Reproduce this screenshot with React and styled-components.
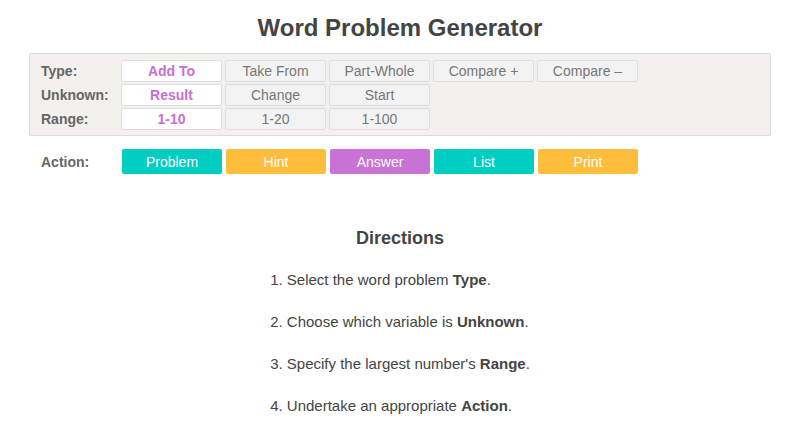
import styled, { createGlobalStyle } from "styled-components";

const GlobalStyle = createGlobalStyle`
  body {
    margin: 0;
    background: #fff;
    font-family: "Liberation Sans", Arial, sans-serif;
    color: #444;
  }
`;

const rows = [
  { label: "Type:", options: ["Add To", "Take From", "Part-Whole", "Compare +", "Compare –"] },
  { label: "Unknown:", options: ["Result", "Change", "Start"] },
  { label: "Range:", options: ["1-10", "1-20", "1-100"] },
];

const actions = [
  { text: "Problem", color: "#00cec3" },
  { text: "Hint", color: "#ffbd3c" },
  { text: "Answer", color: "#c873d5" },
  { text: "List", color: "#00cec3" },
  { text: "Print", color: "#ffbd3c" },
];

const steps = [
  ["Select the word problem ", "Type"],
  ["Choose which variable is ", "Unknown"],
  ["Specify the largest number's ", "Range"],
  ["Undertake an appropriate ", "Action"],
];

const App = () => {
  return (
    <Page>
      <GlobalStyle />
      <Title>Word Problem Generator</Title>
      <Panel>
        {rows.map((row) => (
          <Row key={row.label}>
            <Label>{row.label}</Label>
            {row.options.map((opt, i) => (
              <Option key={opt} selected={i === 0}>
                {opt}
              </Option>
            ))}
          </Row>
        ))}
      </Panel>
      <ActionRow>
        <Label>Action:</Label>
        {actions.map((a) => (
          <ActionButton key={a.text} color={a.color}>
            {a.text}
          </ActionButton>
        ))}
      </ActionRow>
      <Directions>
        <Heading>Directions</Heading>
        <Steps>
          {steps.map(([text, bold], i) => (
            <li key={bold}>
              {i + 1}. {text}
              <b>{bold}</b>.
            </li>
          ))}
        </Steps>
      </Directions>
    </Page>
  );
};

export default App;

const Page = styled.div`
  width: 742px;
  margin-left: 29px;
  padding-top: 14px;
`;

const Title = styled.h1`
  margin: 0 0 11px;
  text-align: center;
  font-size: 24px;
  line-height: 28px;
  font-weight: bold;
  color: #444;
`;

const Panel = styled.div`
  background: #f2f1ee;
  border: 1px solid #dddcda;
  border-radius: 2px;
  padding: 6px 11px 5px;
  display: flex;
  flex-direction: column;
  gap: 2px;
`;

const Row = styled.div`
  display: flex;
  align-items: center;
  gap: 3px;
`;

const Label = styled.div`
  width: 77px;
  font-size: 14px;
  font-weight: bold;
  color: #666;
`;

const Option = styled.div`
  box-sizing: border-box;
  width: 101px;
  height: 22px;
  display: flex;
  align-items: center;
  justify-content: center;
  font-size: 14px;
  border: 1px solid #dedede;
  border-radius: 2px;
  background: ${(p) => (p.selected ? "#fff" : "#f3f3f3")};
  color: ${(p) => (p.selected ? "#c76fd5" : "#777")};
  font-weight: ${(p) => (p.selected ? "bold" : "normal")};
`;

const ActionRow = styled.div`
  display: flex;
  align-items: center;
  gap: 4px;
  padding: 13px 12px 0 12px;
`;

const ActionButton = styled.div`
  width: 100px;
  height: 25px;
  display: flex;
  align-items: center;
  justify-content: center;
  border-radius: 2px;
  background: ${(p) => p.color};
  color: #fff;
  font-size: 14px;
`;

const Directions = styled.div`
  margin-top: 53px;
  text-align: center;
`;

const Heading = styled.h2`
  margin: 0 0 10px;
  font-size: 18px;
  line-height: 22px;
  font-weight: bold;
  color: #444;
`;

const Steps = styled.ol`
  display: inline-block;
  text-align: left;
  list-style: none;
  margin: 0;
  padding: 0;
  font-size: 15px;
  color: #444;

  li {
    line-height: 42px;
  }

  b {
    color: #444;
  }
`;
